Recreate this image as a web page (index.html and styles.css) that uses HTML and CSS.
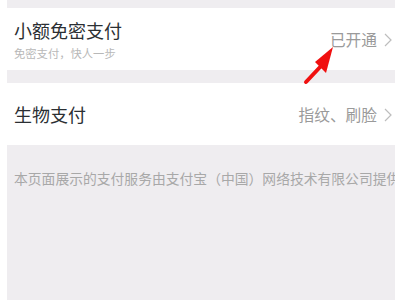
FILE: index.html
```html
<!DOCTYPE html>
<html lang="zh">
<head>
<meta charset="utf-8">
<link rel="stylesheet" href="styles.css">
</head>
<body>
<div class="page">
  <div class="row">
    <div class="left">
      <div class="title">小额免密支付</div>
      <div class="sub">免密支付，快人一步</div>
    </div>
    <div class="right">
      <span class="value">已开通</span>
      <svg class="chev" width="8" height="14" viewBox="0 0 8 14"><polyline points="1,1 7,7 1,13" fill="none" stroke="#bdbdbd" stroke-width="1.2"/></svg>
    </div>
  </div>
  <div class="row row2">
    <div class="left">
      <div class="title">生物支付</div>
    </div>
    <div class="right">
      <span class="value">指纹、刷脸</span>
      <svg class="chev" width="8" height="14" viewBox="0 0 8 14"><polyline points="1,1 7,7 1,13" fill="none" stroke="#bdbdbd" stroke-width="1.2"/></svg>
    </div>
  </div>
  <div class="footer">本页面展示的支付服务由支付宝（中国）网络技术有限公司提供</div>
  <svg class="arrow" width="45" height="45" viewBox="0 0 45 45">
    <line x1="8" y1="40" x2="24" y2="23" stroke="#f01010" stroke-width="4" stroke-linecap="round"/>
    <polygon points="35,5 17,20 28,31" fill="#f01010"/>
  </svg>
</div>
</body>
</html>
```

FILE: styles.css
```css
html, body {
  margin: 0;
  padding: 0;
  background: #ffffff;
  font-family: "Noto Sans CJK SC", "Noto Sans", sans-serif;
}
.page {
  position: relative;
  margin: 0 5px 0 7px;
  height: 300px;
  background: #efedf0;
  padding-top: 8px;
  box-sizing: border-box;
  overflow: hidden;
}
.row {
  background: #ffffff;
  height: 62px;
  display: flex;
  align-items: center;
  justify-content: space-between;
  padding: 0 3px 0 7px;
}
.row2 {
  margin-top: 13px;
}
.title {
  font-size: 18px;
  line-height: 22px;
  color: #2b2f33;
}
.row .left {
  display: flex;
  flex-direction: column;
}
.row:first-child .left {
  margin-top: 0;
}
.row2 .left {
  margin-top: -1px;
}
.sub {
  font-size: 11.3px;
  line-height: 14px;
  margin-top: 5px;
  color: #b8b8b8;
}
.right {
  display: flex;
  align-items: center;
  gap: 7px;
}
.row:first-child .right {
  margin-top: 2px;
}
.row2 .right {
  margin-top: 1px;
}
.value {
  font-size: 15.7px;
  line-height: 20px;
  color: #9a9a9a;
}
.chev {
  display: block;
}
.footer {
  padding: 23px 0 0 7px;
  font-size: 13.8px;
  line-height: 20px;
  color: #a8a8a8;
  white-space: nowrap;
}
.arrow {
  position: absolute;
  left: 291px;
  top: 42px;
}
```
